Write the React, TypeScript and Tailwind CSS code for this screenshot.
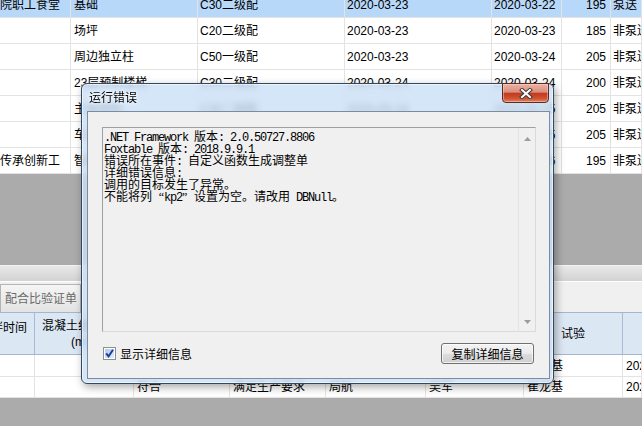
import { ReactNode } from 'react'

const topRows = [
  ['院职工食堂', '基础', 'C30二级配', '2020-03-23', '2020-03-22', '195', '泵送'],
  ['', '场坪', 'C20二级配', '2020-03-23', '2020-03-23', '185', '非泵送'],
  ['', '周边独立柱', 'C50一级配', '2020-03-23', '2020-03-24', '205', '非泵送'],
  ['', '23层预制楼梯', 'C30二级配', '2020-03-24', '2020-03-24', '200', '非泵送'],
  ['', '主体结构', 'C30二级配', '2020-03-24', '2020-03-25', '205', '非泵送'],
  ['', '车库顶板', 'C35二级配', '2020-03-25', '2020-03-25', '205', '非泵送'],
  ['传承创新工', '智能化', 'C30二级配', '2020-03-25', '2020-03-26', '195', '非泵送'],
]

const bottomRows = [
  ['', '', '符合', '满足生产要求', '局航', '吴军', '崔龙基', '2020-03-23'],
  ['', '', '符合', '满足生产要求', '局航', '吴军', '崔龙基', '2020-03-24'],
]

const detailLines = [
  '.NET Framework 版本: 2.0.50727.8806',
  'Foxtable 版本: 2018.9.9.1',
  '错误所在事件: 自定义函数生成调整单',
  '详细错误信息:',
  '调用的目标发生了异常。',
  '不能将列“kp2”设置为空。请改用 DBNull。',
]

// ascii runs get the narrow mono face, quotes are full width, the rest uses the CJK face
const MonoLine = ({ text }: { text: string }) => {
  const runs = text.match(/[\x20-\x7e]+|[“”]|[^\x20-\x7e“”]+/g) ?? []
  return (
    <div className="h-[12px] whitespace-pre">
      {runs.map((run, i) => {
        if (/^[\x20-\x7e]/.test(run))
          return (
            <span key={i} className="font-['Liberation_Mono',monospace] tracking-[-1.2px]">
              {run}
            </span>
          )
        if (run === '“' || run === '”')
          return (
            <span
              key={i}
              className={`inline-block w-[12px] font-['Liberation_Serif',serif] ${run === '“' ? 'text-right' : 'text-left'}`}
            >
              {run}
            </span>
          )
        return (
          <span key={i} className="font-['Noto_Sans_CJK_SC',sans-serif]">
            {run}
          </span>
        )
      })}
    </div>
  )
}

const TopCell = ({ children, col, selected }: { children: ReactNode; col: number; selected: boolean }) => {
  const align =
    col === 0 ? 'pl-0' : col === 5 ? 'justify-end pr-[4px]' : col === 1 ? 'pl-[3px]' : 'pl-[2px]'
  return (
    <div
      className={`flex h-[26px] items-center overflow-hidden whitespace-nowrap border-b border-r border-[#e3e3e3] ${align} ${
        selected ? 'bg-[#b8d8f9]' : 'bg-white'
      }`}
    >
      {children}
    </div>
  )
}

const Checkbox = () => (
  <div className="flex h-[13px] w-[13px] items-center justify-center border border-[#8e8f8f] bg-white">
    <div className="relative h-[9px] w-[9px] bg-[linear-gradient(135deg,#aecbeb,#e3eefa)]">
      <svg viewBox="0 0 9 9" className="absolute inset-0 h-[9px] w-[9px]">
        <path d="M1.2 4.3 L3.6 7.3 L8 0.8" fill="none" stroke="#1d3d99" strokeWidth="2" />
      </svg>
    </div>
  </div>
)

const ErrorDialog = () => (
  <div className="absolute left-[81px] top-[83px] flex h-[301px] w-[473px] flex-col rounded-[6px] border border-[#34475c] bg-[#cbe0f6]/80 shadow-[inset_0_0_0_1px_rgba(255,255,255,0.55),2px_3px_8px_rgba(0,0,0,0.35)] backdrop-blur-[3px]">
    <div className="relative flex h-[27px] shrink-0 items-center pl-[7px] text-[12px] text-black [text-shadow:0_0_5px_#fff,0_0_3px_#fff]">
      运行错误
      <button className="absolute right-[4px] top-[-1px] flex h-[20px] w-[47px] items-center justify-center rounded-b-[4px] border border-[#5b2a22] bg-[linear-gradient(to_bottom,#ebb3a6_0%,#dc8d7b_45%,#c23a20_52%,#cf5233_80%,#e0855f_100%)] shadow-[inset_0_0_0_1px_rgba(255,220,210,0.45)]">
        <svg viewBox="0 0 14 11" className="h-[11px] w-[14px]">
          <path d="M3 2 L11 9 M11 2 L3 9" stroke="#3a3a3a" strokeWidth="4" strokeLinecap="square" />
          <path d="M3 2 L11 9 M11 2 L3 9" stroke="#ffffff" strokeWidth="2" strokeLinecap="square" />
        </svg>
      </button>
    </div>

    <div className="mb-[4px] ml-[5px] mr-[3px] flex flex-1 flex-col border border-[#7c8c9e] bg-[#f0f0f0] pl-[14px] pr-[13px] pt-[15px]">
      <div className="flex h-[205px] border border-[#dadada] border-l-[#a0a0a0] border-t-[#a0a0a0] bg-[#f0f0f0]">
        <div className="flex-1 pl-[1px] pt-[2px] text-[12px] leading-[12px] text-black">
          {detailLines.map((line) => (
            <MonoLine key={line} text={line} />
          ))}
        </div>
        <div className="flex w-[17px] flex-col items-center justify-between border-l border-[#e4e4e4] pb-[7px] pt-[9px]">
          <svg viewBox="0 0 7 4" className="h-[4px] w-[7px]">
            <path d="M0 4 L3.5 0 L7 4 Z" fill="#9c9c9c" />
          </svg>
          <svg viewBox="0 0 7 4" className="h-[4px] w-[7px]">
            <path d="M0 0 L3.5 4 L7 0 Z" fill="#9c9c9c" />
          </svg>
        </div>
      </div>

      <div className="mt-[11px] flex items-center justify-between pl-[1px] pr-[2px]">
        <div className="flex items-center gap-[4px] text-[12px] font-['Noto_Sans_CJK_SC',sans-serif]">
          <Checkbox />
          显示详细信息
        </div>
        <button className="flex h-[21px] w-[93px] items-center justify-center rounded-[3px] border border-[#707070] bg-[linear-gradient(to_bottom,#f3f3f3_0%,#ebebeb_50%,#dddddd_51%,#cfcfcf_100%)] text-[12px] text-black shadow-[inset_0_0_0_1px_rgba(255,255,255,0.7)] font-['Noto_Sans_CJK_SC',sans-serif]">
          复制详细信息
        </button>
      </div>
    </div>
  </div>
)

export default function App() {
  return (
    <div className="relative flex h-[426px] w-[642px] flex-col overflow-hidden bg-[#ababab] text-[12px] text-black font-['Liberation_Sans','Noto_Sans_CJK_SC',sans-serif]">
      <div className="-mt-[8px] grid shrink-0 grid-cols-[71px_127px_147px_147px_70px_49px_31px]">
        {topRows.map((row, r) =>
          row.map((cell, c) => (
            <TopCell key={`${r}-${c}`} col={c} selected={r === 0}>
              {cell}
            </TopCell>
          )),
        )}
      </div>

      <div className="h-[91px] shrink-0" />

      <div className="h-[16px] shrink-0 border-t border-[#f2f2f2] bg-[linear-gradient(to_bottom,#e8e8e8,#d2d2d2)]" />
      <div className="flex h-[31px] shrink-0 items-end border-t border-white bg-[#f0f0f0]">
        <div className="flex h-[28px] w-[81px] items-center border border-b-0 border-[#b4b4b4] bg-[linear-gradient(to_bottom,#f5f5f5,#e3e3e3)] pl-[4px] text-[#6a6a6a]">
          配合比验证单
        </div>
      </div>

      <div className="grid h-[43px] shrink-0 grid-cols-[35px_99px_96px_96px_100px_98px_99px_19px] border-y border-[#a3b6cf] bg-[#dce7f4]">
        <div className="flex flex-col items-end overflow-hidden whitespace-nowrap border-r border-[#a9bbd2] pr-[7px] pt-[7px] leading-[16px]">
          <span>搅拌时间</span>
        </div>
        <div className="flex flex-col items-center justify-center overflow-hidden whitespace-nowrap border-r border-[#a9bbd2] leading-[16px]">
          <span>混凝土组成比例</span>
          <span className="pr-[4px]">(m³)</span>
        </div>
        <div className="border-r border-[#a9bbd2]" />
        <div className="border-r border-[#a9bbd2]" />
        <div className="border-r border-[#a9bbd2]" />
        <div className="border-r border-[#a9bbd2]" />
        <div className="flex items-center justify-center border-r border-[#a9bbd2]">试验</div>
        <div />
      </div>

      <div className="grid shrink-0 grid-cols-[35px_99px_96px_96px_100px_98px_99px_19px]">
        {bottomRows.map((row, r) =>
          row.map((cell, c) => (
            <div
              key={`${r}-${c}`}
              className={`flex items-center overflow-hidden whitespace-nowrap border-b border-r border-[#e3e3e3] bg-white pl-[3px] ${
                r === 0 ? 'h-[22px]' : 'h-[21px]'
              }`}
            >
              {cell}
            </div>
          )),
        )}
      </div>

      <div className="flex-1" />

      <ErrorDialog />
    </div>
  )
}
